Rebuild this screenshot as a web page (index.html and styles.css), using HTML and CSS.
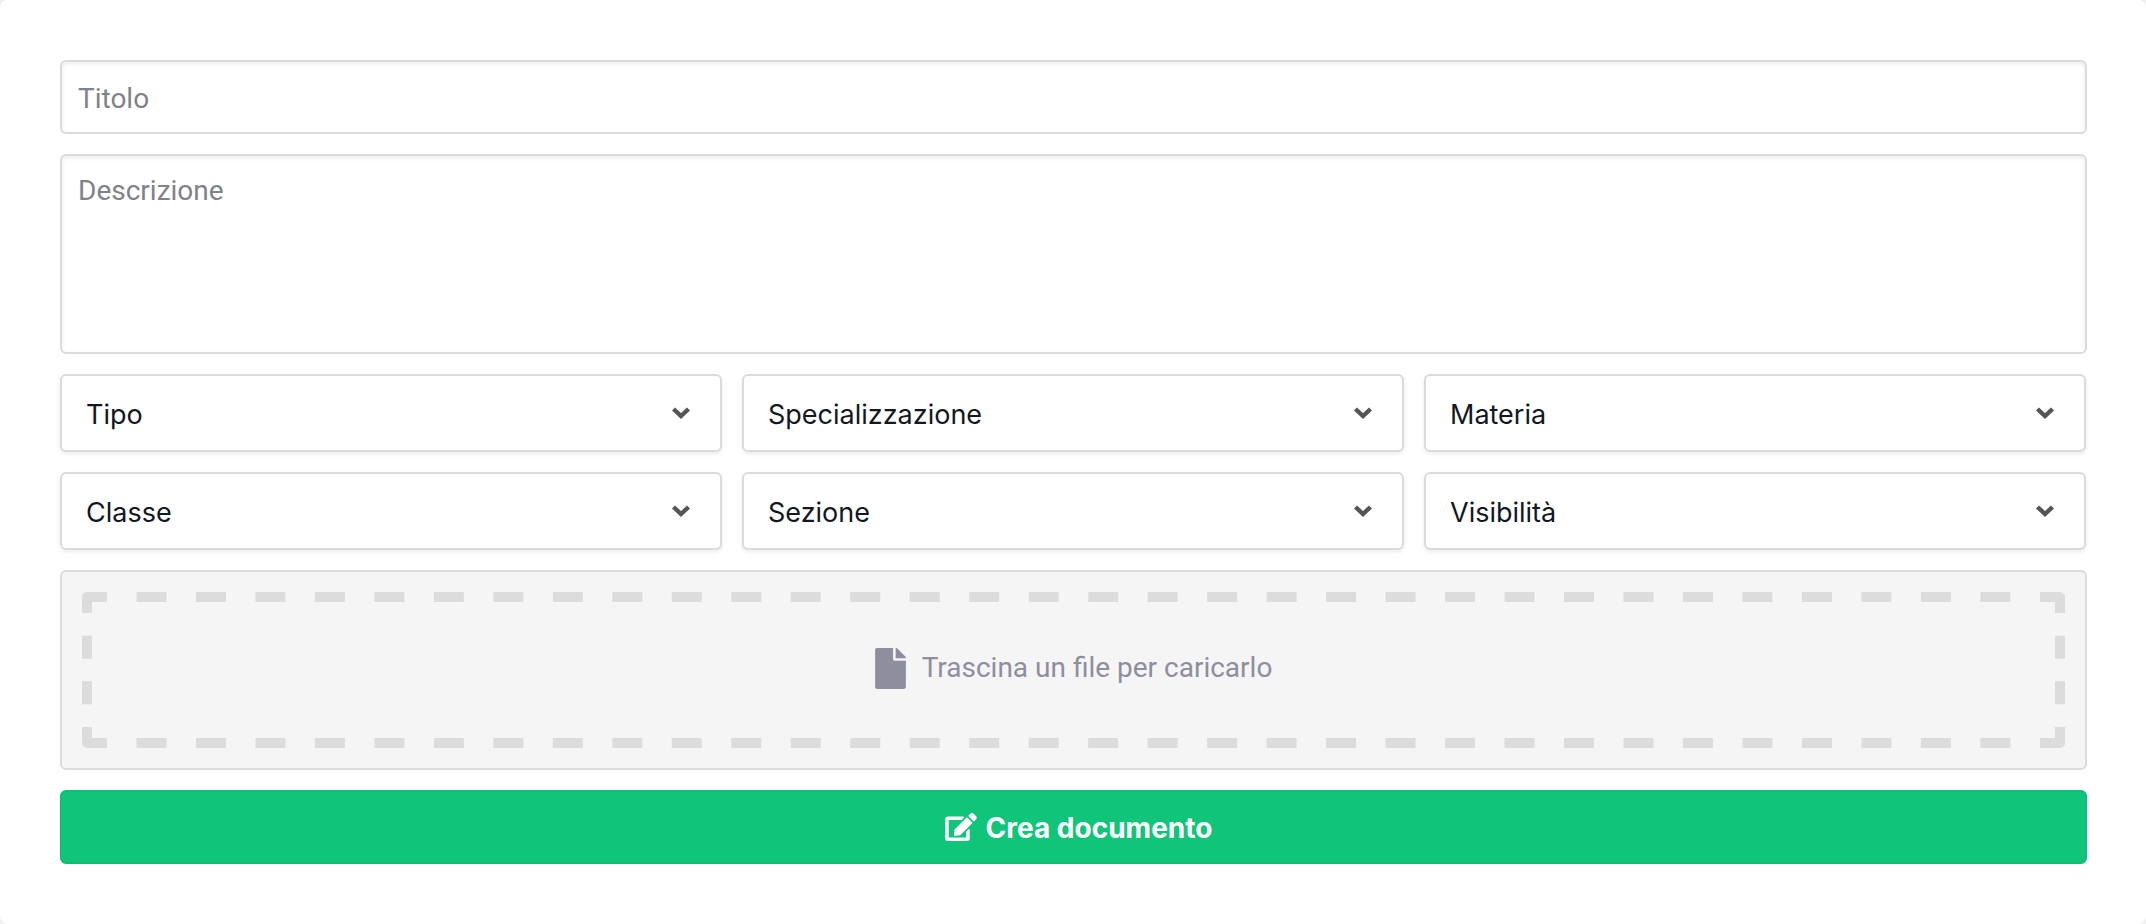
FILE: index.html
```html
<!DOCTYPE html>
<html lang="it">
<head>
<meta charset="utf-8">
<title>Crea documento</title>
<link rel="stylesheet" href="styles.css">
</head>
<body>
<form class="page">
  <input class="field field-title" type="text" placeholder="Titolo">
  <textarea class="field field-desc" placeholder="Descrizione"></textarea>
  <div class="select-grid">
    <label class="select"><select><option>Tipo</option></select><svg class="chevron" viewBox="0 0 20 14"><path d="M2.5 3l7.5 7 7.5-7"/></svg></label>
    <label class="select"><select><option>Specializzazione</option></select><svg class="chevron" viewBox="0 0 20 14"><path d="M2.5 3l7.5 7 7.5-7"/></svg></label>
    <label class="select"><select><option>Materia</option></select><svg class="chevron" viewBox="0 0 20 14"><path d="M2.5 3l7.5 7 7.5-7"/></svg></label>
    <label class="select"><select><option>Classe</option></select><svg class="chevron" viewBox="0 0 20 14"><path d="M2.5 3l7.5 7 7.5-7"/></svg></label>
    <label class="select"><select><option>Sezione</option></select><svg class="chevron" viewBox="0 0 20 14"><path d="M2.5 3l7.5 7 7.5-7"/></svg></label>
    <label class="select"><select><option>Visibilità</option></select><svg class="chevron" viewBox="0 0 20 14"><path d="M2.5 3l7.5 7 7.5-7"/></svg></label>
  </div>
  <div class="dropzone">
    <div class="drop-frame">
      <svg class="dash-art" viewBox="0 0 1983 156">
        <path class="corner" d="M5 21V5H25"/>
        <path class="corner" d="M1958 5H1978V21"/>
        <path class="corner" d="M5 135V151H25"/>
        <path class="corner" d="M1958 151H1978V135"/>
        <path class="dash-h" d="M54.48 5H1929"/>
        <path class="dash-h" d="M54.48 151H1929"/>
        <path class="dash-v" d="M5 43.67V112.4"/>
        <path class="dash-v" d="M1978 43.67V112.4"/>
      </svg>
      <div class="drop-label">
        <svg class="file-icon" viewBox="0 0 384 512"><path d="M224 136V0H24C10.7 0 0 10.7 0 24v464c0 13.3 10.7 24 24 24h336c13.3 0 24-10.7 24-24V160H248c-13.2 0-24-10.8-24-24zm160-14.1v6.1H256V0h6.1c6.4 0 12.5 2.5 17 7l97.9 98c4.5 4.5 7 10.6 7 16.9z"/></svg>
        <span>Trascina un file per caricarlo</span>
      </div>
    </div>
  </div>
  <button class="submit" type="button">
    <svg class="edit-icon" viewBox="0 0 576 512"><path d="M402.6 83.2l90.2 90.2c3.8 3.8 3.8 10 0 13.8L274.4 405.6l-92.8 10.3c-12.4 1.4-22.9-9.1-21.5-21.5l10.3-92.8L388.8 83.2c3.8-3.8 10-3.8 13.8 0zm162-22.9l-48.8-48.8c-15.2-15.2-39.9-15.2-55.2 0l-35.4 35.4c-3.8 3.8-3.8 10 0 13.8l90.2 90.2c3.8 3.8 10 3.8 13.8 0l35.4-35.4c15.2-15.3 15.2-40 0-55.2zM384 346.2V448H64V128h229.8c3.2 0 6.2-1.3 8.5-3.5l40-40c7.6-7.6 2.2-20.5-8.5-20.5H48C21.5 64 0 85.5 0 112v352c0 26.5 21.5 48 48 48h352c26.5 0 48-21.5 48-48V306.2c0-10.7-12.9-16-20.5-8.5l-40 40c-2.2 2.3-3.5 5.3-3.5 8.5z"/></svg>
    <span class="submit-text">Crea documento</span>
  </button>
</form>
</body>
</html>
```
FILE: styles.css
```css
* { box-sizing: border-box; }
html { height: 100%; background: #f0f0f0; }
body { margin: 0; height: 100%; background: #fff; border-radius: 8px; overflow: hidden; }
.page {
  display: flex;
  flex-direction: column;
  gap: 20px;
  padding: 60px 59px 60px 60px;
  height: 924px;
}
.field {
  display: block;
  width: 100%;
  margin: 0;
  border: 2px solid #dbdbdb;
  border-radius: 6px;
  background: #fff;
  box-shadow: inset 0 2px 4px rgba(10, 10, 10, 0.08);
  font-family: Roboto, sans-serif;
  font-size: 28px;
  color: #222;
  padding: 0 16px;
  outline: none;
}
.field::placeholder { color: #7f8389; opacity: 1; }
.field-title { height: 74px; padding-top: 3px; }
.field-desc { height: 200px; padding-top: 17px; resize: none; line-height: 1.3; }
.select-grid {
  display: grid;
  grid-template-columns: repeat(3, 1fr);
  grid-auto-rows: 78px;
  gap: 20px;
  margin-right: 1px;
}
.select { position: relative; display: block; }
.select select {
  appearance: none;
  -webkit-appearance: none;
  width: 100%;
  height: 100%;
  margin: 0;
  border: 2px solid #dbdbdb;
  border-radius: 6px;
  background: #fff;
  box-shadow: 0 2px 4px rgba(10, 10, 10, 0.08);
  font-family: Inter, sans-serif;
  font-size: 27px;
  color: #121722;
  padding: 2px 60px 0 24px;
  outline: none;
}
.chevron {
  position: absolute;
  right: 31px;
  top: 32px;
  width: 20px;
  height: 14px;
  fill: none;
  stroke: #555;
  stroke-width: 4.4;
  pointer-events: none;
}
.dropzone {
  height: 200px;
  border: 2px solid #dbdbdb;
  border-radius: 6px;
  background: #f5f5f5;
  padding: 20px;
}
.drop-frame {
  position: relative;
  height: 100%;
  display: flex;
  align-items: center;
  justify-content: center;
}
.dash-art {
  position: absolute;
  inset: 0;
  width: 100%;
  height: 100%;
  fill: none;
  stroke: #dcdcdc;
  stroke-width: 10;
}
.corner { stroke-linejoin: round; }
.dash-h { stroke-dasharray: 30 29.48; }
.dash-v { stroke-dasharray: 23 22.67; }
.drop-label {
  position: relative;
  display: flex;
  align-items: center;
  gap: 16px;
  margin-top: -6px;
  color: #8e8e9e;
  font-family: Roboto, sans-serif;
  font-size: 28px;
}
.file-icon { width: 31px; height: 41px; margin-top: 2px; fill: currentColor; }
.submit {
  height: 74px;
  margin: 0;
  border: 2px solid #10bd75;
  border-radius: 6px;
  background: #10c57a;
  color: #fff;
  font-family: Inter, sans-serif;
  font-size: 28px;
  font-weight: 700;
  display: flex;
  align-items: center;
  justify-content: center;
  gap: 9px;
  padding: 0 0 0 10px;
}
.submit-text { padding-top: 2px; }
.edit-icon { width: 32px; height: 28px; fill: currentColor; }
```
